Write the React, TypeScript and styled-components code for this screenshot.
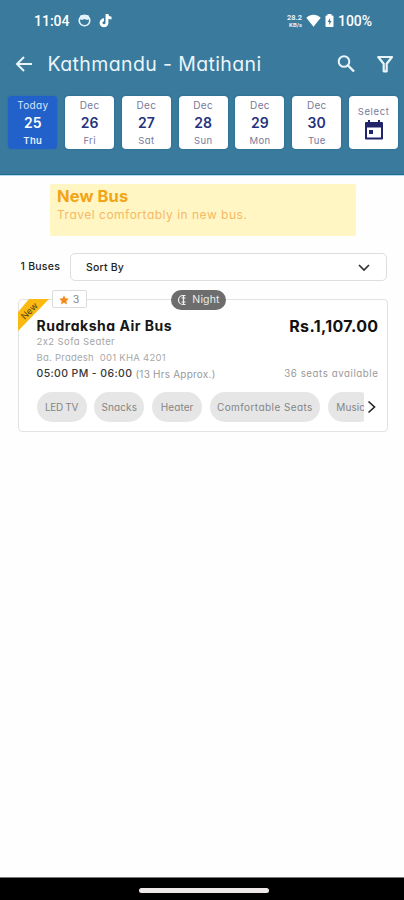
import React from "react";
import styled, { createGlobalStyle } from "styled-components";

const GlobalStyle = createGlobalStyle`
  * { box-sizing: border-box; }
  body { margin: 0; background: #fff; }
`;

const Screen = styled.div`
  width: 404px;
  height: 900px;
  display: flex;
  flex-direction: column;
  overflow: hidden;
  background: #fefefe;
  font-family: Inter, "Open Sans", sans-serif;
  font-feature-settings: "cv11";
`;

const Text = styled.span<{ $size: number; $color?: string; $weight?: number; $spacing?: number; $line?: number }>`
  display: block;
  white-space: nowrap;
  font-size: ${(p) => p.$size}px;
  line-height: ${(p) => p.$line ?? 16}px;
  font-weight: ${(p) => p.$weight ?? 400};
  letter-spacing: ${(p) => p.$spacing ?? 0}px;
  color: ${(p) => p.$color ?? "#222"};
`;

const Header = styled.header`
  height: 176px;
  flex: none;
  background: #397a9d;
  border-bottom: 1px solid #b5dcec;
  box-shadow: inset 0 -1px 0 #1d6b90;
`;

const StatusBar = styled.div`
  height: 40px;
  padding: 12px 32px 0 34px;
  display: flex;
  align-items: flex-start;
  font-family: Roboto, sans-serif;
`;

const StatusGroup = styled.div<{ $gap: number; $end?: boolean }>`
  display: flex;
  height: 17px;
  align-items: center;
  gap: ${(p) => p.$gap}px;
  margin-left: ${(p) => (p.$end ? "auto" : 0)};
`;

const NetSpeed = styled.div`
  display: flex;
  flex-direction: column;
  align-items: flex-end;
`;

const TitleBar = styled.div`
  height: 48px;
  padding: 0 9px 0 14px;
  display: flex;
  align-items: center;
`;

const TitleText = styled.h1`
  margin: 0 auto 0 12.5px;
  font-size: 19.5px;
  line-height: 24px;
  font-weight: 400;
  letter-spacing: 0.38px;
  color: #e9f5fb;
  white-space: nowrap;
`;

const ActionIcon = styled.span`
  display: flex;
  margin-left: 18.5px;
`;

const Dates = styled.div`
  display: flex;
  gap: 7.8px;
  padding: 7.5px 0 0 8.3px;
`;

const DateCard = styled.div<{ $active?: boolean }>`
  flex: none;
  width: 49px;
  height: 53px;
  border-radius: 4px;
  background: ${(p) => (p.$active ? "#2161c9" : "#fff")};
  box-shadow: 0 0 1.5px ${(p) => (p.$active ? "#2862ad" : "#0e6189")};
  display: flex;
  flex-direction: column;
  align-items: center;
  padding-top: 1px;
`;

const SelectLabel = styled.div`
  padding-top: 7px;
`;

const Banner = styled.section`
  flex: none;
  width: 306px;
  height: 52px;
  margin: 8px 0 0 50px;
  padding: 1px 7px;
  border-radius: 2px;
  background: #fff6c4;
`;

const SortRow = styled.div`
  flex: none;
  display: flex;
  align-items: center;
  margin: 17px 17px 0 20.5px;
`;

const SortSelect = styled.div`
  width: 317px;
  height: 28px;
  margin-left: auto;
  padding: 1px 15px 0 15px;
  border: 1.5px solid #dedede;
  border-radius: 5px;
  background: #fff;
  display: flex;
  align-items: center;
  justify-content: space-between;
`;

const BusCard = styled.article`
  position: relative;
  flex: none;
  width: 370px;
  height: 133px;
  margin: 18px 0 0 17.5px;
  padding: 17px 8px 0 18px;
  border: 1.5px solid #e2e2e2;
  border-radius: 4px;
  background: #fff;
`;

const Ribbon = styled.svg`
  position: absolute;
  left: -2px;
  top: -1px;
`;

const Rating = styled.div`
  position: absolute;
  left: 33px;
  top: -10px;
  width: 35px;
  height: 18px;
  padding-top: 1px;
  border: 1px solid #dcdcdc;
  border-radius: 2px;
  background: #fff;
  display: flex;
  align-items: center;
  justify-content: center;
  gap: 4px;
`;

const NightBadge = styled.div`
  position: absolute;
  left: 152.500px;
  top: -10px;
  width: 55px;
  height: 20px;
  border-radius: 10px;
  background: #6d6d6d;
  display: flex;
  align-items: center;
  justify-content: center;
  gap: 4px;
`;

const Line = styled.div<{ $height: number }>`
  height: ${(p) => p.$height}px;
  display: flex;
  align-items: center;
`;

const Right = styled.div`
  margin-left: auto;
`;

const Amenities = styled.div`
  display: flex;
  align-items: center;
  margin-top: 10px;
`;

const ChipList = styled.div`
  width: 327px;
  overflow: hidden;
  display: flex;
  gap: 7.8px;
`;

const Chip = styled.div<{ $width: number }>`
  flex: none;
  width: ${(p) => p.$width}px;
  height: 30px;
  border-radius: 15px;
  background: #e6e6e6;
  display: flex;
  align-items: center;
  justify-content: center;
`;

const NavBar = styled.div`
  flex: none;
  height: 23px;
  margin-top: auto;
  border-top: 1px solid #777;
  background: #000;
  display: flex;
  justify-content: center;
  padding: 10px 0 0 3px;
`;

const HomePill = styled.div`
  width: 130px;
  height: 5px;
  border-radius: 3px;
  background: #eee8e8;
`;

const days = [
  { top: "Today", date: "25", day: "Thu" },
  { top: "Dec", date: "26", day: "Fri" },
  { top: "Dec", date: "27", day: "Sat" },
  { top: "Dec", date: "28", day: "Sun" },
  { top: "Dec", date: "29", day: "Mon" },
  { top: "Dec", date: "30", day: "Tue" },
];

const chips = [
  { label: "LED TV", width: 50, spacing: -0.3 },
  { label: "Snacks", width: 50, spacing: 0.1 },
  { label: "Heater", width: 50, spacing: 0.1 },
  { label: "Comfortable Seats", width: 110, spacing: 0.42 },
  { label: "Music", width: 46, spacing: 0.1 },
];

export default function App() {
  return (
    <>
      <GlobalStyle />
      <Screen>
        <Header>
          <StatusBar>
            <StatusGroup $gap={8}>
              <Text $size={14} $weight={500} $color="#fff" $spacing={0}>11:04</Text>
              <svg width="13" height="13" viewBox="0 0 13 13">
                <circle cx="6.5" cy="6.5" r="5.3" fill="none" stroke="#e4f3fa" strokeWidth="1.6" />
                <path d="M2 1.8 4 1l2.5.6L9 1l2 .8v3.4c-1 .8-2 .3-2.8.6L6.5 5l-1.700.8C4 5.500 3 6 2 5.200z" fill="#e4f3fa" />
              </svg>
              <svg width="14" height="15" viewBox="0 0 14 15">
                <path d="M8 1v8.800a3 3 0 1 1-3-3M8 1c.2 2.500 2 4 4.500 4" fill="none" stroke="#fff" strokeWidth="2.900" />
              </svg>
            </StatusGroup>
            <StatusGroup $gap={4} $end>
              <NetSpeed>
                <Text $size={7.5} $weight={700} $color="#e4f3fa" $line={8}>28.2</Text>
                <Text $size={6} $weight={700} $color="#e4f3fa" $line={6}>KB/s</Text>
              </NetSpeed>
              <svg width="15" height="13" viewBox="0 0 15 13">
                <path d="M.3 3.700C4.500-.2 10.500-.2 14.700 3.700L7.500 12.700z" fill="#fff" />
              </svg>
              <svg width="9" height="14" viewBox="0.5 0 9 14">
                <path d="M3 0h4v1.500h1.200q.8 0 .8.800v10q0 .8-.8.800H1.800q-.8 0-.8-.8v-10q0-.8.8-.8H3z" fill="#fff" />
                <path d="M5.600 4 3.200 8h1.500v3L7 7H5.600z" fill="#397a9d" />
              </svg>
              <Text $size={14} $weight={500} $color="#fff" $spacing={-0.05}>100%</Text>
            </StatusGroup>
          </StatusBar>
          <TitleBar>
            <svg width="21" height="20" viewBox="0 0 21 20">
              <path d="M18 10H3.500M10 3 3 10l7 7" fill="none" stroke="#e9f5fb" strokeWidth="2" />
            </svg>
            <TitleText>Kathmandu - Matihani</TitleText>
            <ActionIcon>
              <svg width="22" height="22" viewBox="0 0 22 22">
                <circle cx="9" cy="8.500" r="5.300" fill="none" stroke="#e9f5fb" strokeWidth="2" />
                <path d="m13 12.500 6 6" stroke="#e9f5fb" strokeWidth="2.400" />
              </svg>
            </ActionIcon>
            <ActionIcon>
              <svg width="20" height="20" viewBox="0 0 20 20">
                <path d="M3.200 3h13.800l-5.300 6.800V17.300H8.700V9.800z" fill="none" stroke="#e9f5fb" strokeWidth="2.200" strokeLinejoin="round" />
              </svg>
            </ActionIcon>
          </TitleBar>
          <Dates>
            {days.map((d, i) => (
              <DateCard key={d.date} $active={i === 0}>
                <Text $size={10} $line={17} $spacing={0.35} $color={i ? "#77799a" : "#d5e6ff"}>{d.top}</Text>
                <Text $size={14} $line={17} $weight={600} $spacing={0.1} $color={i ? "#26327d" : "#fff"}>{d.date}</Text>
                <Text $size={9.5} $line={19} $spacing={0.35} $weight={i ? 400 : 600} $color={i ? "#77799a" : "#e4efff"}>{d.day}</Text>
              </DateCard>
            ))}
            <DateCard>
              <SelectLabel>
                <Text $size={9.5} $spacing={0.6} $color="#77799a">Select</Text>
              </SelectLabel>
              <svg width="20" height="21" viewBox="0 0 20 21">
                <path d="M2 3h16v15.500H2z" fill="none" stroke="#22246a" strokeWidth="2" strokeLinejoin="round" />
                <path d="M1 3h18v4.500H1zM4 0h2v3H4zM14 0h2v3h-2z" fill="#22246a" />
                <rect x="5" y="10" width="4" height="4" fill="#22246a" />
              </svg>
            </DateCard>
          </Dates>
        </Header>

        <Banner>
          <Text $size={16.5} $line={22} $weight={700} $spacing={0.1} $color="#f3a416">New Bus</Text>
          <Text $size={12} $line={16} $spacing={0.5} $color="#f6b965">Travel comfortably in new bus.</Text>
        </Banner>

        <SortRow>
          <Text $size={10.5} $weight={500} $spacing={0.25}>1 Buses</Text>
          <SortSelect>
            <Text $size={10.5} $weight={500} $spacing={0.2}>Sort By</Text>
            <svg width="14" height="10" viewBox="0 0 14 10">
              <path d="m2 2 5 5 5-5" fill="none" stroke="#333" strokeWidth="1.700" />
            </svg>
          </SortSelect>
        </SortRow>

        <BusCard>
          <Ribbon width="34" height="34" viewBox="0 0 34 34">
            <path d="M12 0h20L1 32V13z" fill="#fbba12" />
            <text x="12.500" y="15" transform="rotate(-45 12.500 12)" textAnchor="middle" fontSize="9" fill="#4e4013">New</text>
          </Ribbon>
          <Rating>
            <svg width="10" height="10" viewBox="0 0 10 10">
              <path d="m5 .2 1.400 3.100 3.400.4-2.500 2.300.7 3.400L5 7.700 2 9.400l.7-3.400L.2 3.700l3.400-.4z" fill="#f58a1c" />
            </svg>
            <Text $size={10.5} $color="#888">3</Text>
          </Rating>
          <NightBadge>
            <svg width="11" height="12" viewBox="0 0 11 12">
              <path d="M8.500 1.500H6A4.500 4.500 0 0 0 6 10.500h2.500M6.500 1.500v9M4.500 4h4M4.500 8h4" fill="none" stroke="#f2f2f2" strokeWidth="1.200" />
            </svg>
            <Text $size={10.5} $spacing={0.15} $color="#ececec">Night</Text>
          </NightBadge>
          <Line $height={17}>
            <Text $size={14} $weight={700} $spacing={0.52} $color="#171717">Rudraksha Air Bus</Text>
            <Right>
              <Text $size={16} $weight={700} $spacing={0.36} $color="#111">Rs.1,107.00</Text>
            </Right>
          </Line>
          <Line $height={15}>
            <Text $size={9.5} $spacing={0.4} $color="#a5a5a5">2x2 Sofa Seater</Text>
          </Line>
          <Line $height={17}>
            <Text $size={9.5} $spacing={0.25} $color="#a8a8a8">Ba. Pradesh&nbsp; 001 KHA 4201</Text>
          </Line>
          <Line $height={16}>
            <Text $size={10.5} $weight={500} $spacing={0.38} $color="#383838">05:00 PM - 06:00&nbsp;</Text>
            <Text $size={10} $spacing={0.22} $color="#999">(13 Hrs Approx.)</Text>
            <Right>
              <Text $size={9.7} $spacing={0.57} $color="#999">36 seats available</Text>
            </Right>
          </Line>
          <Amenities>
            <ChipList>
              {chips.map((c) => (
                <Chip key={c.label} $width={c.width}>
                  <Text $size={10} $spacing={c.spacing} $color="#858585">{c.label}</Text>
                </Chip>
              ))}
            </ChipList>
            <svg width="15" height="16" viewBox="0 0 15 16">
              <path d="m4.500 2.500 6 5.500-6 5.500" fill="none" stroke="#222" strokeWidth="1.600" />
            </svg>
          </Amenities>
        </BusCard>

        <NavBar>
          <HomePill />
        </NavBar>
      </Screen>
    </>
  );
}
